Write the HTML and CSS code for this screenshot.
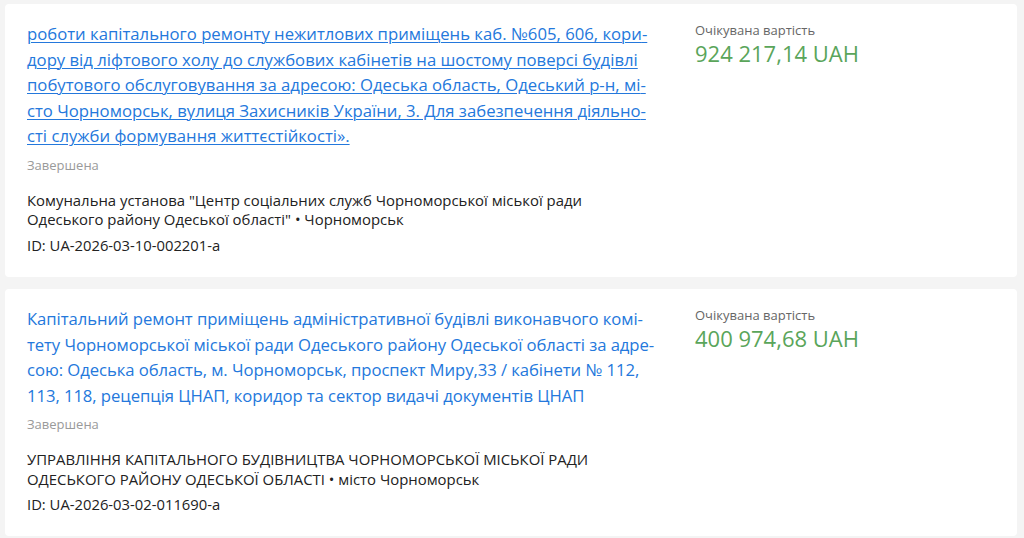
FILE: index.html
```html
<!DOCTYPE html>
<html lang="uk">
<head>
<meta charset="utf-8">
<link rel="stylesheet" href="styles.css">
</head>
<body>
<div class="list">
  <div class="card">
    <div class="main">
      <a class="title title--hover" href="#">роботи капітального ремонту нежитлових приміщень каб. №605, 606, кори&shy;дору від ліфтового холу до службових кабінетів на шостому поверсі будівлі побутового обслуговування за адресою: Одеська область, Одеський р-н, мі&shy;сто Чорноморськ, вулиця Захисників України, 3. Для забезпечення діяльно&shy;сті служби формування життєстійкості».</a>
      <div class="status">Завершена</div>
      <div class="org">Комунальна установа "Центр соціальних служб Чорноморської міської ради Одеського району Одеської області" • Чорноморськ</div>
      <div class="id">ID: UA-2026-03-10-002201-a</div>
    </div>
    <div class="side">
      <div class="label">Очікувана вартість</div>
      <div class="amount">924 217,14 UAH</div>
    </div>
  </div>
  <div class="card">
    <div class="main">
      <a class="title title--tight" href="#">Капітальний ремонт приміщень адміністративної будівлі виконавчого комі&shy;тету Чорноморської міської ради Одеського району Одеської області за адре&shy;сою: Одеська область, м. Чорноморськ, проспект Миру,33 / кабінети № 112, 113, 118, рецепція ЦНАП, коридор та сектор видачі документів ЦНАП</a>
      <div class="status">Завершена</div>
      <div class="org">УПРАВЛІННЯ КАПІТАЛЬНОГО БУДІВНИЦТВА ЧОРНОМОРСЬКОЇ МІСЬКОЇ РАДИ ОДЕСЬКОГО РАЙОНУ ОДЕСЬКОЇ ОБЛАСТІ • місто Чорноморськ</div>
      <div class="id">ID: UA-2026-03-02-011690-a</div>
    </div>
    <div class="side">
      <div class="label">Очікувана вартість</div>
      <div class="amount">400 974,68 UAH</div>
    </div>
  </div>
</div>
</body>
</html>
```

FILE: styles.css
```css
html, body {
  margin: 0;
  padding: 0;
  background: #f4f4f4;
}

body {
  font-family: "Open Sans", "Noto Sans", sans-serif;
  color: #222;
}

.list {
  display: flex;
  flex-direction: column;
  gap: 12px;
  padding: 4px 7px 4px 5px;
}

.card {
  display: flex;
  gap: 37px;
  background: #fff;
  border-radius: 4px;
  padding: 17px 22px 22px 22px;
}

.main {
  width: 631px;
  display: flex;
  flex-direction: column;
}

.title {
  font-size: 16.7px;
  line-height: 25.6px;
  color: #2478dc;
  text-decoration: none;
  hyphens: manual;
}

.title--tight {
  letter-spacing: -0.07px;
}

.title--hover {
  text-decoration: underline;
  text-underline-offset: 2px;
  text-decoration-thickness: 1px;
}

.status {
  margin-top: 7px;
  font-size: 13px;
  line-height: 18px;
  color: #9a9a9a;
}

.org {
  margin-top: 17px;
  font-size: 14.9px;
  line-height: 19.5px;
  color: #222;
}

.id {
  margin-top: 5px;
  font-size: 14.8px;
  line-height: 20px;
  color: #222;
}

.side {
  display: flex;
  flex-direction: column;
}

.label {
  font-size: 13px;
  line-height: 18px;
  color: #666;
}

.amount {
  font-size: 22px;
  line-height: 28px;
  color: #5aa55a;
}
```
